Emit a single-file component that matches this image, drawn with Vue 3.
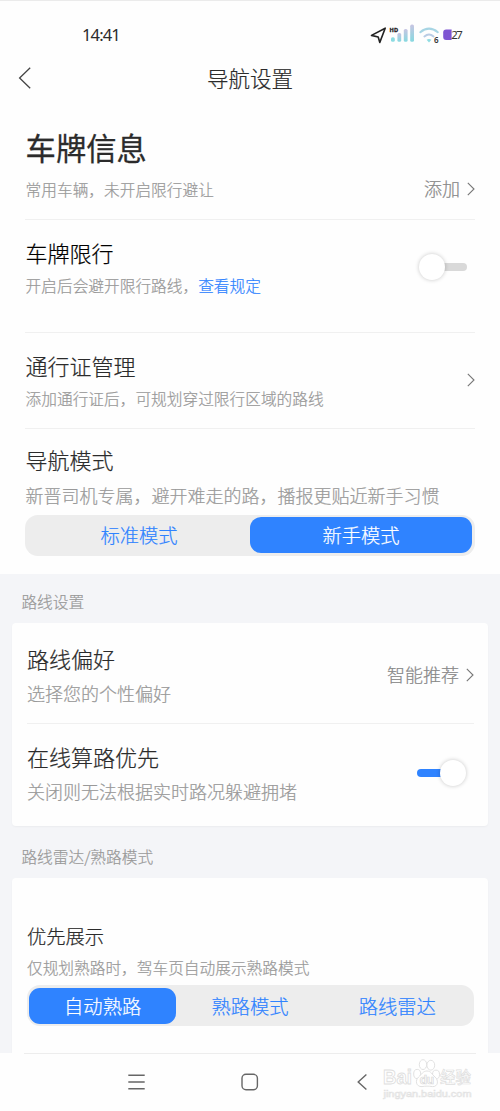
<script setup>
const priority = ['自动熟路', '熟路模式', '路线雷达']
const modes = ['标准模式', '新手模式']
</script>

<template>
  <div class="screen">
    <div class="status">
      <span class="clock">14:41</span>
      <svg class="signals" width="96" height="24" viewBox="0 0 96 24">
        <defs>
          <linearGradient id="sig" x1="0" y1="1" x2="0" y2="0">
            <stop offset="0" stop-color="#86d9e0" />
            <stop offset="1" stop-color="#c8c5e2" />
          </linearGradient>
        </defs>
        <path d="M1.5 12.4 L15.2 5.2 L9.8 19.4 L8.2 14 Z" fill="none" stroke="#222" stroke-width="1.6" stroke-linejoin="round" />
        <text x="19.6" y="8.8" font-size="5.8" font-weight="700" textLength="8.4" lengthAdjust="spacingAndGlyphs" fill="#222" stroke="#222" stroke-width=".3">HD</text>
        <rect x="21" y="14.2" width="3.8" height="4.6" rx="1.6" fill="#8bdbe1" />
        <rect x="27.4" y="10" width="3.8" height="8.8" rx="1.6" fill="url(#sig)" />
        <rect x="33.8" y="6" width="3.8" height="12.8" rx="1.6" fill="url(#sig)" />
        <rect x="40.2" y="1.6" width="3.8" height="17.2" rx="1.6" fill="url(#sig)" />
        <path d="M50.3 9.2 Q59 2.2 67.8 9.2" fill="none" stroke="#a7d5e4" stroke-width="2.1" stroke-linecap="round" />
        <path d="M54.4 13.4 Q59 9.6 63.6 13.4" fill="none" stroke="#b9cce4" stroke-width="2" stroke-linecap="round" />
        <path d="M56.6 16.8 Q59 15.2 61.4 16.8 L59 19.5 Z" fill="#8fdce2" />
        <text x="64" y="19.9" font-size="8" font-weight="600" fill="#333">6</text>
        <path d="M76.2 6.4 H81.6 V17 H76.2 Q73.2 17 73.2 14 V9.4 Q73.2 6.4 76.2 6.4 Z" fill="#7e55d2" />
        <text x="81.3" y="16.2" font-size="11.4" textLength="11.5" fill="#333">27</text>
      </svg>
    </div>

    <header class="header">
      <svg class="back" width="14" height="24" viewBox="0 0 14 24">
        <path d="M12.2 1.8 L1.6 12 L12.2 22.2" fill="none" stroke="#444" stroke-width="1.3" />
      </svg>
      <h1>导航设置</h1>
    </header>

    <section class="top">
      <div class="row plate">
        <div class="texts">
          <h2 class="big">车牌信息</h2>
          <p class="small">常用车辆，未开启限行避让</p>
        </div>
        <div class="link add">
          <span>添加</span>
          <svg class="chev" width="8" height="14" viewBox="0 0 8 14"><path d="M.8 .8 L7 7 L.8 13.2" /></svg>
        </div>
      </div>

      <div class="row limit">
        <div class="texts">
          <h3 class="black">车牌限行</h3>
          <p class="small">开启后会避开限行路线，<a>查看规定</a></p>
        </div>
        <div class="switch"><i></i></div>
      </div>

      <div class="row pass">
        <div class="texts">
          <h3>通行证管理</h3>
          <p class="small">添加通行证后，可规划穿过限行区域的路线</p>
        </div>
        <svg class="chev" width="8" height="14" viewBox="0 0 8 14"><path d="M.8 .8 L7 7 L.8 13.2" /></svg>
      </div>

      <div class="mode">
        <h3>导航模式</h3>
        <p class="mid">新晋司机专属，避开难走的路，播报更贴近新手习惯</p>
        <div class="segment">
          <span v-for="(m, i) in modes" :key="m" :class="{ on: i === 1 }">{{ m }}</span>
        </div>
      </div>
    </section>

    <section class="group">
      <h4>路线设置</h4>
      <div class="card">
        <div class="row pref">
          <div class="texts">
            <h3>路线偏好</h3>
            <p class="mid">选择您的个性偏好</p>
          </div>
          <div class="link">
            <span>智能推荐</span>
            <svg class="chev" width="8" height="14" viewBox="0 0 8 14"><path d="M.8 .8 L7 7 L.8 13.2" /></svg>
          </div>
        </div>
        <div class="row online">
          <div class="texts">
            <h3>在线算路优先</h3>
            <p class="mid">关闭则无法根据实时路况躲避拥堵</p>
          </div>
          <div class="switch checked"><i></i></div>
        </div>
      </div>
      <h4 class="second">路线雷达/熟路模式</h4>
      <div class="card radar">
        <h3 class="lesser">优先展示</h3>
        <p class="small">仅规划熟路时，驾车页自动展示熟路模式</p>
        <div class="segment three">
          <span v-for="(m, i) in priority" :key="m" :class="{ on: i === 0 }">{{ m }}</span>
        </div>
      </div>
    </section>

    <nav class="navbar">
      <svg width="18" height="18" viewBox="0 0 18 18"><path d="M.3 2.2 H16.7 M.3 9 H16.7 M.3 15.8 H16.7" /></svg>
      <svg width="18" height="18" viewBox="0 0 18 18"><rect x="1" y="1.3" width="15.4" height="15.4" rx="4" /></svg>
      <svg width="18" height="18" viewBox="0 0 18 18"><path d="M12.4 1.6 L4.2 9 L12.4 16.4" /></svg>
      <svg class="mark" width="96" height="48" viewBox="0 0 96 48">
        <g fill="#fff" stroke="#dedede" stroke-width=".9">
          <text x="3" y="28.8" font-size="20" textLength="29" lengthAdjust="spacingAndGlyphs" font-weight="700">Bai</text>
          <ellipse cx="37.2" cy="19" rx="3.5" ry="4.6" />
          <ellipse cx="43" cy="9.6" rx="3.7" ry="4.9" />
          <ellipse cx="50.8" cy="10.2" rx="3.9" ry="4.9" />
          <ellipse cx="56" cy="19.5" rx="3.5" ry="4.4" />
          <path d="M47 16 C51 16 52 19.4 55 22 C59 25.4 58 32 52.4 31.6 C48.5 31 45.6 31 42 31.6 C36 32 34.8 25.4 38.6 22 C41.6 19.4 43 16 47 16 Z" />
          <text x="39.8" y="28.6" font-size="12" font-weight="700" textLength="14.4" stroke="#d8d8d8" stroke-width=".7">du</text>
          <text x="60" y="28.4" font-size="15.5" font-weight="500" textLength="31" lengthAdjust="spacingAndGlyphs" stroke-width=".7">经验</text>
        </g>
        <text x="3.5" y="42.4" font-size="9.4" textLength="88" lengthAdjust="spacingAndGlyphs" fill="#fff" stroke="#e2e2e2" stroke-width=".6">jingyan.baidu.com</text>
      </svg>
    </nav>
  </div>
</template>

<style>
body {
  margin: 0;
}
</style>

<style scoped>
.screen {
  width: 500px;
  height: 1111px;
  overflow: hidden;
  display: flex;
  flex-direction: column;
  box-sizing: border-box;
  border-top: 1px solid #ebebeb;
  background: #fefefe;
  font-family: "Noto Sans CJK SC", sans-serif;
  font-weight: 300;
  color: #2b2b2b;
}
h1, h2, h3, h4, p {
  margin: 0;
  font-weight: 300;
  white-space: nowrap;
}
h1, h3, h4, p, .link span, .segment span {
  -webkit-text-stroke: 0.22px currentColor;
}
.status {
  height: 54px;
  flex: none;
  display: flex;
  justify-content: space-between;
  padding: 22px 34px 0 82px;
  box-sizing: border-box;
}
.clock {
  font: 400 16.6px/24px "Noto Sans", sans-serif;
  letter-spacing: -0.9px;
}
.signals {
  font-family: "Noto Sans", sans-serif;
  font-weight: 400;
}
.header {
  height: 46px;
  flex: none;
  display: grid;
  grid-template-columns: 82px 1fr 82px;
  align-items: center;
}
.back {
  margin-left: 18px;
}
h1 {
  padding-bottom: 1px;
  font-size: 21.5px;
  line-height: 30px;
  text-align: center;
}
.top {
  height: 473px;
  flex: none;
  padding: 0 25px;
  box-sizing: border-box;
}
.row {
  display: flex;
  justify-content: space-between;
  box-sizing: border-box;
  border-bottom: 1px solid #f0f0f0;
}
h3 {
  font-size: 22px;
  line-height: 30px;
}
.black {
  color: #000;
}
.small {
  font-size: 15.7px;
  line-height: 22px;
  color: #999;
}
.mid {
  font-size: 18px;
  line-height: 24px;
  color: #999;
}
.small a {
  color: #2f83ff;
}
.top .texts,
.mode h3,
.mode .mid {
  padding-left: 0.6px;
}
.plate {
  height: 119px;
  padding-top: 26px;
}
.big {
  font-size: 30.3px;
  line-height: 40px;
  font-weight: 400;
  -webkit-text-stroke: 0.3px #2b2b2b;
}
.plate .small {
  margin-top: 12px;
}
.link {
  height: 26px;
  display: flex;
  align-items: center;
  gap: 7px;
  font-size: 18px;
  line-height: 24px;
  color: #888;
}
.link span {
  margin-top: -3px;
}
.add {
  margin-top: 49px;
}
.chev {
  fill: none;
  stroke: #777;
  stroke-width: 1.1;
}
.limit {
  height: 113px;
  padding-top: 17px;
}
.limit .small {
  margin-top: 8px;
}
.pass {
  height: 96px;
  padding-top: 17px;
}
.pass .small {
  margin-top: 8px;
}
.pass > .chev {
  margin-top: 23px;
}
.switch {
  width: 50px;
  height: 26px;
  margin: 17px 8px 0 0;
  display: flex;
  align-items: center;
}
.switch::after {
  content: "";
  flex: 1;
  height: 8px;
  margin-left: -4px;
  border-radius: 0 4px 4px 0;
  background: #d9d9d9;
}
.switch i {
  width: 26px;
  height: 26px;
  flex: none;
  margin-left: 2px;
  border-radius: 50%;
  background: #fff;
  box-shadow: 0 0 4px rgba(0, 0, 0, 0.22);
  position: relative;
  z-index: 1;
}
.switch.checked {
  flex-direction: row-reverse;
}
.switch.checked i {
  margin: 0;
}
.switch.checked::after {
  margin: 0 -4px 0 1px;
  border-radius: 4px 0 0 4px;
  background: #2f83ff;
}
.mode {
  padding-top: 15px;
}
.mode .mid {
  margin-top: 9px;
}
.segment {
  height: 41px;
  margin-top: 8px;
  padding: 2px 3px;
  box-sizing: border-box;
  display: grid;
  grid-template-columns: 1fr 1fr;
  border-radius: 13px;
  background: #ededed;
  font-size: 19.3px;
  line-height: 36px;
  text-align: center;
  color: #2f83ff;
}
.segment span {
  height: 36px;
}
.segment .on {
  border-radius: 11px;
  background: #2f83ff;
  color: #fff;
}
.group {
  height: 479px;
  flex: none;
  overflow: hidden;
  padding: 17px 12px 0;
  box-sizing: border-box;
  background: #f4f5f8;
}
h4 {
  padding-left: 9.4px;
  font-size: 15.7px;
  line-height: 22px;
  color: #999;
}
.card {
  height: 203px;
  margin-top: 10px;
  padding: 0 14px 0 15px;
  box-sizing: border-box;
  border-radius: 4px;
  background: #fefefe;
  box-shadow: 0 1px 2px rgba(0, 0, 0, 0.04);
}
.pref {
  height: 101px;
  padding-top: 20px;
}
.pref .mid,
.online .mid {
  margin-top: 8px;
}
.pref .link {
  margin-top: 19px;
}
.online {
  border: 0;
  padding-top: 17px;
}
.online .switch {
  margin-top: 19px;
}
.second {
  margin-top: 20px;
}
.radar {
  padding-top: 43px;
  height: 190px;
}
.lesser {
  font-size: 19.3px;
}
.radar .small {
  margin-top: 6px;
}
.three {
  grid-template-columns: repeat(3, 1fr);
  margin-top: 6px;
  padding: 3px 3px 2px 2px;
}
.navbar {
  height: 58px;
  flex: none;
  display: flex;
  padding: 20px 0 0 128px;
  gap: 95px;
  box-sizing: border-box;
  position: relative;
  background: linear-gradient(#ededed, #ededed) 24px 0 / 452px 1px no-repeat;
  fill: none;
  stroke: #666;
  stroke-width: 1.4;
}
.mark {
  position: absolute;
  left: 380px;
  top: 2px;
  font-family: "Liberation Sans", "Noto Sans CJK SC", sans-serif;
}
</style>
